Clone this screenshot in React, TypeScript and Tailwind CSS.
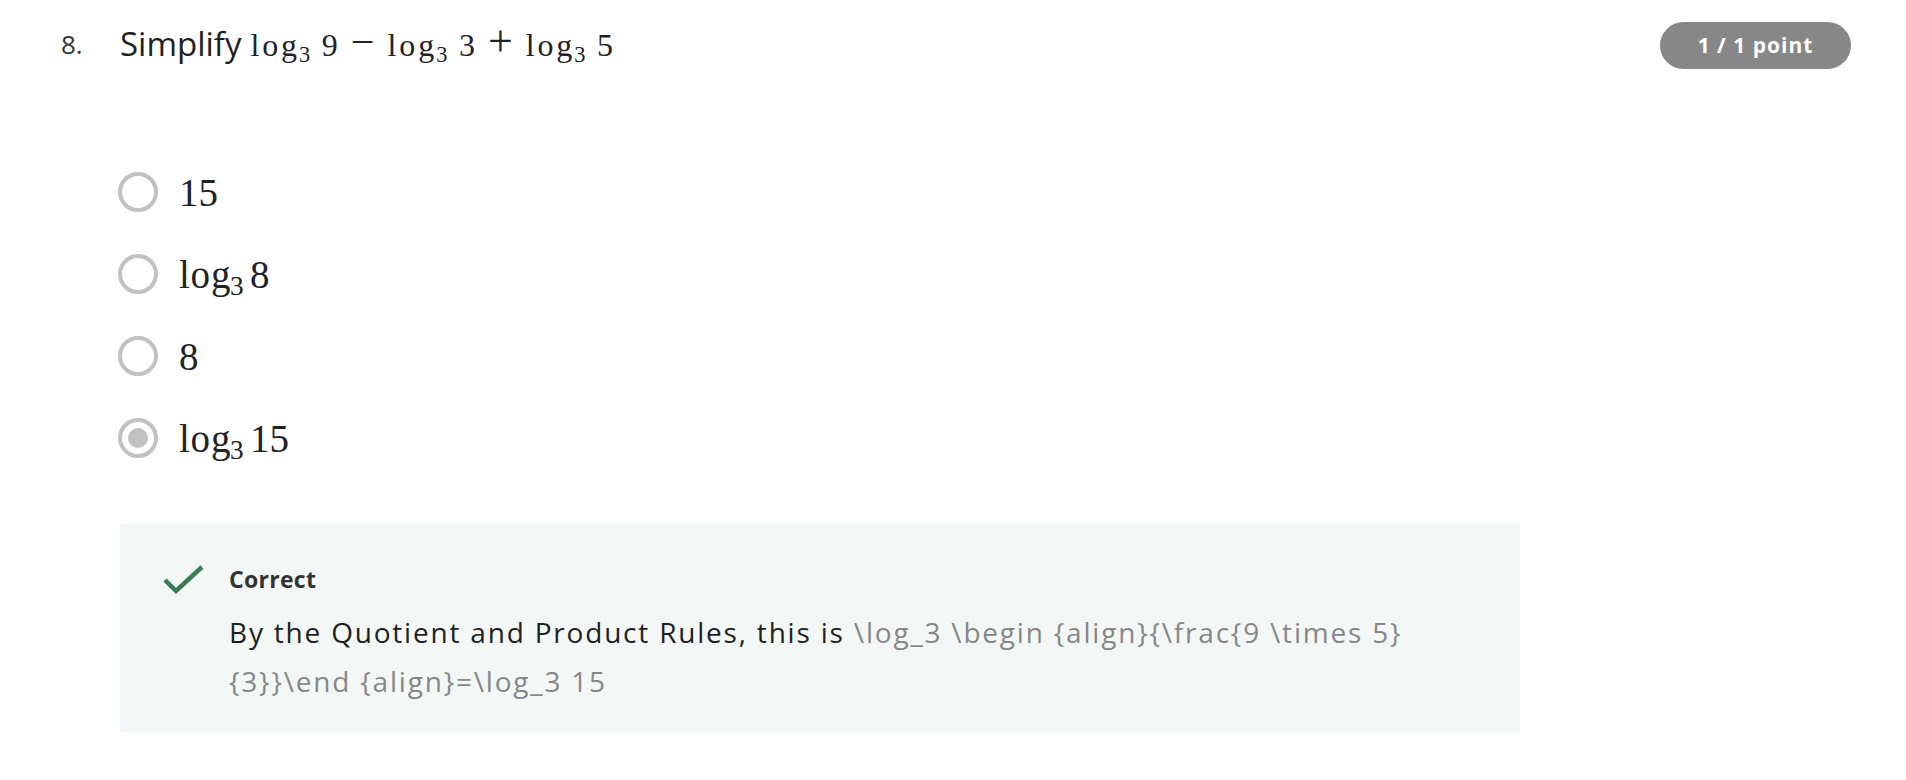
import React from "react";

const Log = ({ sub, tight }: { sub: string; tight?: boolean }) => (
  <span className="whitespace-nowrap">
    <span className={tight ? "tracking-[0.02em]" : "tracking-[0.09em]"}>log</span>
    <sub className="text-[0.7em] leading-none relative top-[0.28em] -ml-[0.04em] tracking-normal">
      {sub}
    </sub>
  </span>
);

const Radio = ({ checked }: { checked?: boolean }) => (
  <span className="flex h-[40px] w-[40px] shrink-0 items-center justify-center rounded-full border-[4px] border-[#c1c1c1] bg-white">
    {checked && <span className="h-[20px] w-[20px] rounded-full bg-[#c1c1c1]" />}
  </span>
);

const options = [
  { key: "a", content: <span>15</span> },
  {
    key: "b",
    content: (
      <span>
        <Log sub="3" tight />
        <span className="ml-[0.16em]">8</span>
      </span>
    ),
  },
  { key: "c", content: <span>8</span> },
  {
    key: "d",
    content: (
      <span>
        <Log sub="3" tight />
        <span className="ml-[0.16em]">15</span>
      </span>
    ),
    checked: true,
  },
];

const App = () => {
  return (
    <div className="min-h-screen w-full bg-white font-['Open_Sans',sans-serif] text-[#1f1f1f]">
      <div className="flex items-start pl-[61px] pr-[55px] pt-[20px]">
        <div className="w-[59px] shrink-0 text-[26px] leading-[48px] text-[#333]">8.</div>

        <div className="flex-1">
          <div className="flex h-[48px] items-baseline text-[33px] leading-[48px]">
            <span>Simplify</span>
            <span className="ml-[9px] font-['Liberation_Serif',serif] text-[32px] text-[#222]">
              <Log sub="3" />
              <span className="ml-[0.36em]">9</span>
              <span className="mx-[13px] text-[42px] leading-none">−</span>
              <Log sub="3" />
              <span className="ml-[0.36em]">3</span>
              <span className="mx-[13px] text-[44px] leading-none">+</span>
              <Log sub="3" />
              <span className="ml-[0.36em]">5</span>
            </span>
          </div>

          <div className="mt-[104px] -ml-[2px] flex flex-col gap-[42px]">
            {options.map((o) => (
              <div key={o.key} className="flex h-[40px] items-center gap-[21px]">
                <Radio checked={o.checked} />
                <span className="font-['Liberation_Serif',serif] text-[39px] leading-none text-[#222]">
                  {o.content}
                </span>
              </div>
            ))}
          </div>

          <div className="mt-[66px] flex w-[1400px] items-start gap-[25px] bg-[#f3f8f6] pl-[43px] pt-[39px] pb-[26px]">
            <svg width="41" height="31" viewBox="0 0 41 31" className="mt-[1px] shrink-0">
              <polyline
                points="2,16 13,27 39,3"
                fill="none"
                stroke="#3a7d55"
                strokeWidth="4.5"
              />
            </svg>
            <div>
              <div className="text-[23px] font-bold leading-[32px] tracking-[0.3px] text-[#333]">
                Correct
              </div>
              <div className="mt-[13px] text-[28px] leading-[49px] tracking-[1.8px]">
                <div className="whitespace-nowrap">
                  By the Quotient and Product Rules, this is{" "}
                  <span className="text-[#878787]">
                    \log_3 \begin {"{align}"}
                    {"{\\frac{9 \\times 5}"}
                  </span>
                </div>
                <div className="whitespace-nowrap text-[#878787]">
                  {"{3}}\\end {align}=\\log_3 15"}
                </div>
              </div>
            </div>
          </div>
        </div>

        <div className="mt-[2px] flex h-[47px] w-[191px] shrink-0 items-center justify-center rounded-full bg-[#878787] text-[21px] font-bold tracking-[1px] text-white">
          1 / 1 point
        </div>
      </div>
    </div>
  );
};

export default App;
